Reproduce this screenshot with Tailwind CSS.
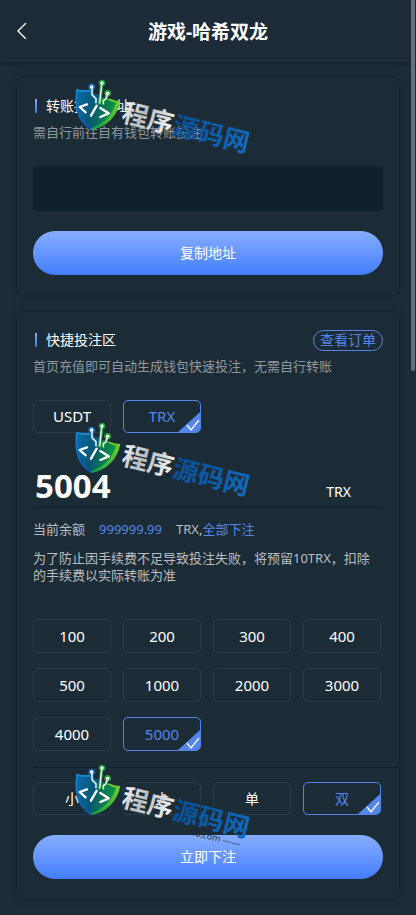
<!DOCTYPE html>
<html lang="zh-CN">
<head>
  <meta charset="UTF-8">
  <meta name="viewport" content="width=device-width, initial-scale=1">
  <title>游戏-哈希双龙</title>
  <script src="https://cdn.jsdelivr.net/npm/@tailwindcss/browser@4"></script>
</head>
<body class="min-h-screen bg-[#1c2c38] font-['Noto_Sans','Noto_Sans_CJK_SC',sans-serif] text-white">

  <!-- shared graphics -->
  <svg class="absolute size-0" aria-hidden="true">
    <defs>
      <linearGradient id="shieldBlue" x1="0" y1="0" x2="0" y2="1">
        <stop offset="0" stop-color="#1a8bd0"/>
        <stop offset="1" stop-color="#0a50a8"/>
      </linearGradient>
      <linearGradient id="shieldGreen" x1="1" y1="0" x2="0" y2="1">
        <stop offset="0" stop-color="#7ad329"/>
        <stop offset="1" stop-color="#0f9a4c"/>
      </linearGradient>
      <linearGradient id="shieldInner" x1="0" y1="0" x2="1" y2="0.2">
        <stop offset="0" stop-color="#0a69a8"/>
        <stop offset="0.5" stop-color="#06586f"/>
        <stop offset="1" stop-color="#0d9440"/>
      </linearGradient>
      <linearGradient id="silver" x1="0" y1="0" x2="1" y2="0.3">
        <stop offset="0" stop-color="#ffffff"/>
        <stop offset="0.5" stop-color="#b9bcbe"/>
        <stop offset="1" stop-color="#eceded"/>
      </linearGradient>
      <linearGradient id="brandBlue" x1="0" y1="0" x2="1" y2="0.3">
        <stop offset="0" stop-color="#07488a"/>
        <stop offset="1" stop-color="#1069bb"/>
      </linearGradient>
      <symbol id="brand" viewBox="0 0 200 100">
        <svg width="200" height="100" viewBox="0 0 600 300">
          <path d="M49 56 Q68 62 88 59 L114 80 L92 180 Q59 161 50 123 Q43 90 49 56Z" fill="url(#shieldBlue)"/>
          <path d="M114 80 L150 86 Q166 93 181 93 Q174 128 153 149 Q128 174 92 180Z" fill="url(#shieldGreen)"/>
          <path d="M53 63 Q70 68 88 65 L116 74 L150 92 Q158 97 168 98 Q160 124 143 143 Q122 165 94 174 Q64 154 55 122 Q49 94 53 63Z" fill="url(#shieldInner)"/>
          <g fill="none" stroke-linecap="round" stroke-linejoin="round">
            <path d="M96 55 V74 L108 86 V98" stroke="#1470bd" stroke-width="9"/>
            <path d="M125 44 L119 99 M143 73 L137 88 L131 91 V101" stroke="#1b9c40" stroke-width="10"/>
            <circle cx="95" cy="51" r="10" fill="#1673c4"/>
            <circle cx="126" cy="39" r="10" fill="#1b9c40"/>
            <circle cx="143" cy="70" r="10" fill="#2ba63a"/>
            <path d="M96 55 V74 L108 86 V98 M125 44 L119 99 M142 73 L137 88 L130 91 V101" stroke="#ffffff" stroke-width="4"/>
            <g fill="#ffffff">
              <circle cx="95" cy="51" r="5"/><circle cx="126" cy="39" r="5"/><circle cx="143" cy="70" r="5"/>
            </g>
            <path d="M81 103 L59 111 L77 127 M110 107 L93 137 M121 114 L146 130 L121 141" stroke="#ffffff" stroke-width="7"/>
          </g>
        </svg>
        <g transform="rotate(14 60 53)" font-family="Noto Sans CJK SC, sans-serif" font-weight="700">
          <text x="60" y="51" font-size="26" fill="url(#silver)">程序</text>
          <text x="112" y="51" font-size="26" fill="url(#brandBlue)">源码网</text>
          <text x="131" y="62" font-size="9" font-weight="400" font-family="Noto Sans, sans-serif" fill="#1c2c38">ma.com ——</text>
        </g>
      </symbol>
      <symbol id="tick" viewBox="0 0 22 20">
        <path d="M22 0V20H0Z" fill="#5585e8"/>
        <path d="M9 13L13 18L21 8" fill="none" stroke="#fff" stroke-width="1.3"/>
      </symbol>
    </defs>
  </svg>

  <div class="fixed top-0 right-px z-20 h-[371px] w-1 rounded-b bg-[#64717a]"></div>

  <header class="relative flex h-[62px] items-center justify-center bg-[#1c2b37] shadow-[0_1px_4px_#0f1c26]">
    <button type="button" aria-label="返回" class="absolute left-4 flex h-8 w-4 items-center">
      <svg class="h-4 w-3" viewBox="0 0 12 16" fill="none" stroke="#fff" stroke-width="1.4"><path d="M10 0L2 8L10 16"/></svg>
    </button>
    <h1 class="pt-0.5 text-[19px] font-bold">游戏-哈希双龙</h1>
  </header>

  <main class="flex flex-col gap-[17px] px-[17px] py-4">

    <section class="relative rounded-md bg-[#1c2c37] px-4 pt-4 pb-5 shadow-[0_0_6px_#13212c]">
      <div class="flex h-6 items-center gap-[9px] pl-0.5">
        <span class="h-3.5 w-0.5 bg-linear-to-b from-[#86a9fb] to-[#4576dd]"></span>
        <h2 class="text-sm">转账投注地址</h2>
      </div>
      <p class="mt-0.5 text-[13px] leading-6 text-[#90989e]">需自行前往自有钱包转账投注</p>
      <input type="text" readonly aria-label="转账投注地址" class="mt-[22px] block h-[45px] w-full rounded bg-[#10212e] px-3 text-sm outline-none">
      <button type="button" class="mt-5 block h-11 w-full rounded-full bg-linear-to-b from-[#88adff] to-[#427dfc] text-sm">复制地址</button>
      <svg class="pointer-events-none absolute -top-2 left-[43px] z-10 h-[100px] w-[200px]"><use href="#brand"/></svg>
    </section>

    <section class="rounded-md bg-[#1c2c37] px-4 pt-4 pb-5 shadow-[0_0_6px_#13212c]">
      <div class="flex h-6 items-center gap-[9px] pl-0.5">
        <span class="h-3.5 w-0.5 bg-linear-to-b from-[#86a9fb] to-[#4576dd]"></span>
        <h2 class="text-sm">快捷投注区</h2>
        <a href="#orders" class="ml-auto flex h-[21px] items-center rounded-full border border-[#5585e8] px-[6px] text-sm text-[#5585e8]">查看订单</a>
      </div>
      <p class="mt-0.5 text-[13px] leading-6 text-[#90989e]">首页充值即可自动生成钱包快速投注，无需自行转账</p>

      <div class="relative mt-[22px] grid grid-cols-4 gap-3 pr-0.5 text-[15px]">
        <button type="button" class="h-[33px] rounded-[5px] border border-[#2c3c49]">USDT</button>
        <button type="button" aria-pressed="true" class="relative h-[33px] overflow-hidden rounded-[5px] border border-[#5585e8] text-[#5585e8]">TRX<svg class="absolute right-0 bottom-0 h-5 w-[22px]"><use href="#tick"/></svg></button>
        <svg class="pointer-events-none absolute top-[13px] left-[27px] z-10 h-[100px] w-[200px]"><use href="#brand"/></svg>
      </div>

      <label class="mt-8 flex h-[43px] items-center border-b border-[#13212c] pr-8">
        <input type="text" value="5004" aria-label="投注金额" class="min-w-0 flex-1 pl-0.5 text-[33px] leading-10 font-bold outline-none">
        <span class="mt-3 text-sm">TRX</span>
      </label>

      <p class="mt-[9px] flex text-[13px] leading-6 text-[#b9bfc3]">
        <span>当前余额</span>
        <span class="ml-[14px] text-[#5585e8]">999999.99</span>
        <span class="ml-[14px]">TRX,</span>
        <button type="button" class="text-[#5585e8]">全部下注</button>
      </p>
      <p class="mt-[9px] pr-2 text-[13px] leading-[17px] text-[#b9bfc3]">为了防止因手续费不足导致投注失败，将预留10TRX，扣除的手续费以实际转账为准</p>

      <div class="mt-[35px] grid grid-cols-4 gap-x-3 gap-y-[15px] pr-0.5 text-[15px]">
        <button type="button" class="h-[34px] rounded-[5px] border border-[#2c3c49]">100</button>
        <button type="button" class="h-[34px] rounded-[5px] border border-[#2c3c49]">200</button>
        <button type="button" class="h-[34px] rounded-[5px] border border-[#2c3c49]">300</button>
        <button type="button" class="h-[34px] rounded-[5px] border border-[#2c3c49]">400</button>
        <button type="button" class="h-[34px] rounded-[5px] border border-[#2c3c49]">500</button>
        <button type="button" class="h-[34px] rounded-[5px] border border-[#2c3c49]">1000</button>
        <button type="button" class="h-[34px] rounded-[5px] border border-[#2c3c49]">2000</button>
        <button type="button" class="h-[34px] rounded-[5px] border border-[#2c3c49]">3000</button>
        <button type="button" class="h-[34px] rounded-[5px] border border-[#2c3c49]">4000</button>
        <button type="button" aria-pressed="true" class="relative h-[34px] overflow-hidden rounded-[5px] border border-[#5585e8] text-[#5585e8]">5000<svg class="absolute right-0 bottom-0 h-5 w-[22px]"><use href="#tick"/></svg></button>
      </div>

      <div class="mt-4 -mr-4 border-t border-[#13212c]"></div>

      <div class="relative mt-[14px] grid grid-cols-4 gap-3 pr-0.5 text-sm">
        <button type="button" class="h-[33px] rounded-[5px] border border-[#2c3c49]">小</button>
        <button type="button" class="h-[33px] rounded-[5px] border border-[#2c3c49]">大</button>
        <button type="button" class="h-[33px] rounded-[5px] border border-[#2c3c49]">单</button>
        <button type="button" aria-pressed="true" class="relative h-[33px] overflow-hidden rounded-[5px] border border-[#5585e8] text-[#5585e8]">双<svg class="absolute right-0 bottom-0 h-5 w-[22px]"><use href="#tick"/></svg></button>
        <svg class="pointer-events-none absolute -top-[27px] left-[27px] z-10 h-[100px] w-[200px]"><use href="#brand"/></svg>
      </div>

      <button type="button" class="mt-5 block h-11 w-full rounded-full bg-linear-to-b from-[#88adff] to-[#427dfc] text-sm">立即下注</button>
    </section>
  </main>
</body>
</html>
